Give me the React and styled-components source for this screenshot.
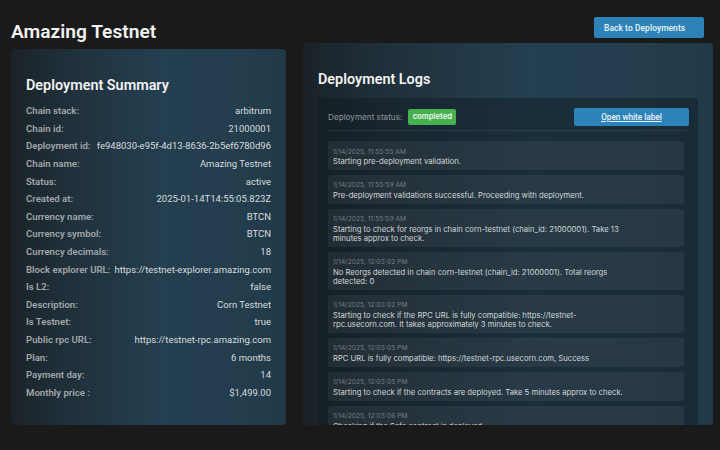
import React from "react";
import styled, { createGlobalStyle } from "styled-components";

const GlobalStyle = createGlobalStyle`
  html, body {
    margin: 0;
    height: 100%;
    background: #1a1a1a;
    overflow: hidden;
  }
  * {
    box-sizing: border-box;
  }
`;

const cardGradient = `linear-gradient(90deg, #1a2228 0%, #1f2f39 18%, #243f50 55%, #233d4d 85%, #213947 100%)`;

const Page = styled.div`
  width: 720px;
  height: 450px;
  padding: 17px 7px 25px 11px;
  display: grid;
  grid-template-columns: 275px 410px;
  column-gap: 17px;
  font-family: Roboto, "Liberation Sans", sans-serif;
  color: #e6e6e6;
`;

const Column = styled.div`
  display: flex;
  flex-direction: column;
  min-height: 0;
`;

const TitleRow = styled.div`
  height: 32px;
  padding-bottom: 4px;
  display: flex;
  align-items: flex-end;
`;

const Title = styled.h1`
  margin: 0;
  font-size: 19.2px;
  line-height: 26px;
  font-weight: 600;
  color: #f2f2f2;
`;

const ButtonRow = styled.div`
  height: 26px;
  padding-right: 9px;
  display: flex;
  justify-content: flex-end;
  align-items: flex-start;
`;

const BackButton = styled.button`
  width: 110px;
  height: 21px;
  padding: 0 0 0 10px;
  border: none;
  border-radius: 2px;
  background: #2d83b8;
  color: #f0f6fa;
  font-family: inherit;
  font-size: 8.4px;
  font-weight: 500;
  letter-spacing: 0.1px;
  text-align: left;
`;

const Card = styled.section`
  flex: 1;
  min-height: 0;
  border-radius: 4px;
  background: ${cardGradient};
  overflow: hidden;
  padding: ${(p) => p.$padding};
`;

const CardTitle = styled.h2`
  margin: 0;
  font-size: 14.4px;
  line-height: 20px;
  font-weight: 600;
  color: #f2f2f2;
`;

const SummaryList = styled.dl`
  margin: 6px 0 0;
`;

const SummaryRow = styled.div`
  height: 17.6px;
  display: flex;
  justify-content: space-between;
  align-items: center;
  white-space: nowrap;
`;

const SummaryLabel = styled.dt`
  font-size: 9.6px;
  font-weight: 600;
  color: #a2a6a9;
`;

const SummaryValue = styled.dd`
  margin: 0;
  font-size: 9.5px;
  color: #d8dcde;
`;

const LogsTitle = styled(CardTitle)`
  margin-bottom: 8px;
`;

const LogsPanel = styled.div`
  height: 327px;
  border-radius: 3px 3px 0 0;
  background: rgba(15, 25, 32, 0.42);
  padding: 0 9px 0 10px;
  overflow: hidden;
  font-family: Inter, "Liberation Sans", sans-serif;
`;

const StatusRow = styled.div`
  height: 33px;
  padding: 10px 0 5px;
  display: flex;
  align-items: center;
  justify-content: space-between;
  border-bottom: 1px solid rgba(255, 255, 255, 0.08);
`;

const StatusGroup = styled.div`
  display: flex;
  align-items: center;
  gap: 6px;
`;

const StatusLabel = styled.span`
  font-size: 8.16px;
  color: #8f979c;
`;

const StatusBadge = styled.span`
  width: 48px;
  height: 16px;
  border-radius: 2px;
  background: #46b04e;
  color: #f2f8f2;
  font-size: 7.7px;
  font-weight: 600;
  display: flex;
  align-items: center;
  justify-content: center;
`;

const WhiteLabelButton = styled.a`
  width: 115px;
  height: 18px;
  border-radius: 2px;
  background: #2d83b8;
  color: #eaf3f8;
  font-family: Roboto, "Liberation Sans", sans-serif;
  font-size: 8.2px;
  font-weight: 500;
  text-decoration: underline;
  display: flex;
  align-items: center;
  justify-content: center;
`;

const LogList = styled.div`
  margin-top: 10px;
  width: 356px;
  display: flex;
  flex-direction: column;
  gap: 4.7px;
`;

const LogEntry = styled.div`
  padding: 5.5px 5px 4.5px;
  border-radius: 2px;
  background: rgba(255, 255, 255, 0.06);
`;

const LogTime = styled.div`
  font-size: 6.72px;
  line-height: 9.3px;
  color: #737e86;
`;

const LogMessage = styled.div`
  margin-top: 1px;
  max-width: 295px;
  font-size: 7.68px;
  line-height: 9px;
  color: #d2d6d9;
`;

const summary = [
  ["Chain stack:", "arbitrum"],
  ["Chain id:", "21000001"],
  ["Deployment id:", "fe948030-e95f-4d13-8636-2b5ef6780d96"],
  ["Chain name:", "Amazing Testnet"],
  ["Status:", "active"],
  ["Created at:", "2025-01-14T14:55:05.823Z"],
  ["Currency name:", "BTCN"],
  ["Currency symbol:", "BTCN"],
  ["Currency decimals:", "18"],
  ["Block explorer URL:", "https://testnet-explorer.amazing.com"],
  ["Is L2:", "false"],
  ["Description:", "Corn Testnet"],
  ["Is Testnet:", "true"],
  ["Public rpc URL:", "https://testnet-rpc.amazing.com"],
  ["Plan:", "6 months"],
  ["Payment day:", "14"],
  ["Monthly price :", "$1,499.00"],
];

const logs = [
  ["1/14/2025, 11:55:55 AM", "Starting pre-deployment validation."],
  ["1/14/2025, 11:55:59 AM", "Pre-deployment validations successful. Proceeding with deployment."],
  ["1/14/2025, 11:55:59 AM", "Starting to check for reorgs in chain corn-testnet (chain_id: 21000001). Take 13 minutes approx to check."],
  ["1/14/2025, 12:03:02 PM", "No Reorgs detected in chain corn-testnet (chain_id: 21000001). Total reorgs detected: 0"],
  ["1/14/2025, 12:03:02 PM", "Starting to check if the RPC URL is fully compatible: https://testnet-rpc.usecorn.com. It takes approximately 3 minutes to check."],
  ["1/14/2025, 12:03:05 PM", "RPC URL is fully compatible: https://testnet-rpc.usecorn.com, Success"],
  ["1/14/2025, 12:03:05 PM", "Starting to check if the contracts are deployed. Take 5 minutes approx to check."],
  ["1/14/2025, 12:03:06 PM", "Checking if the Safe contract is deployed"],
];

export default function App() {
  return (
    <>
      <GlobalStyle />
      <Page>
        <Column>
          <TitleRow>
            <Title>Amazing Testnet</Title>
          </TitleRow>
          <Card $padding="27px 15px">
            <CardTitle>Deployment Summary</CardTitle>
            <SummaryList>
              {summary.map(([label, value]) => (
                <SummaryRow key={label}>
                  <SummaryLabel>{label}</SummaryLabel>
                  <SummaryValue>{value}</SummaryValue>
                </SummaryRow>
              ))}
            </SummaryList>
          </Card>
        </Column>
        <Column>
          <ButtonRow>
            <BackButton>Back to Deployments</BackButton>
          </ButtonRow>
          <Card $padding="27px 15px 0">
            <LogsTitle>Deployment Logs</LogsTitle>
            <LogsPanel>
              <StatusRow>
                <StatusGroup>
                  <StatusLabel>Deployment status:</StatusLabel>
                  <StatusBadge>completed</StatusBadge>
                </StatusGroup>
                <WhiteLabelButton>Open white label</WhiteLabelButton>
              </StatusRow>
              <LogList>
                {logs.map(([time, message], index) => (
                  <LogEntry key={index}>
                    <LogTime>{time}</LogTime>
                    <LogMessage>{message}</LogMessage>
                  </LogEntry>
                ))}
              </LogList>
            </LogsPanel>
          </Card>
        </Column>
      </Page>
    </>
  );
}
